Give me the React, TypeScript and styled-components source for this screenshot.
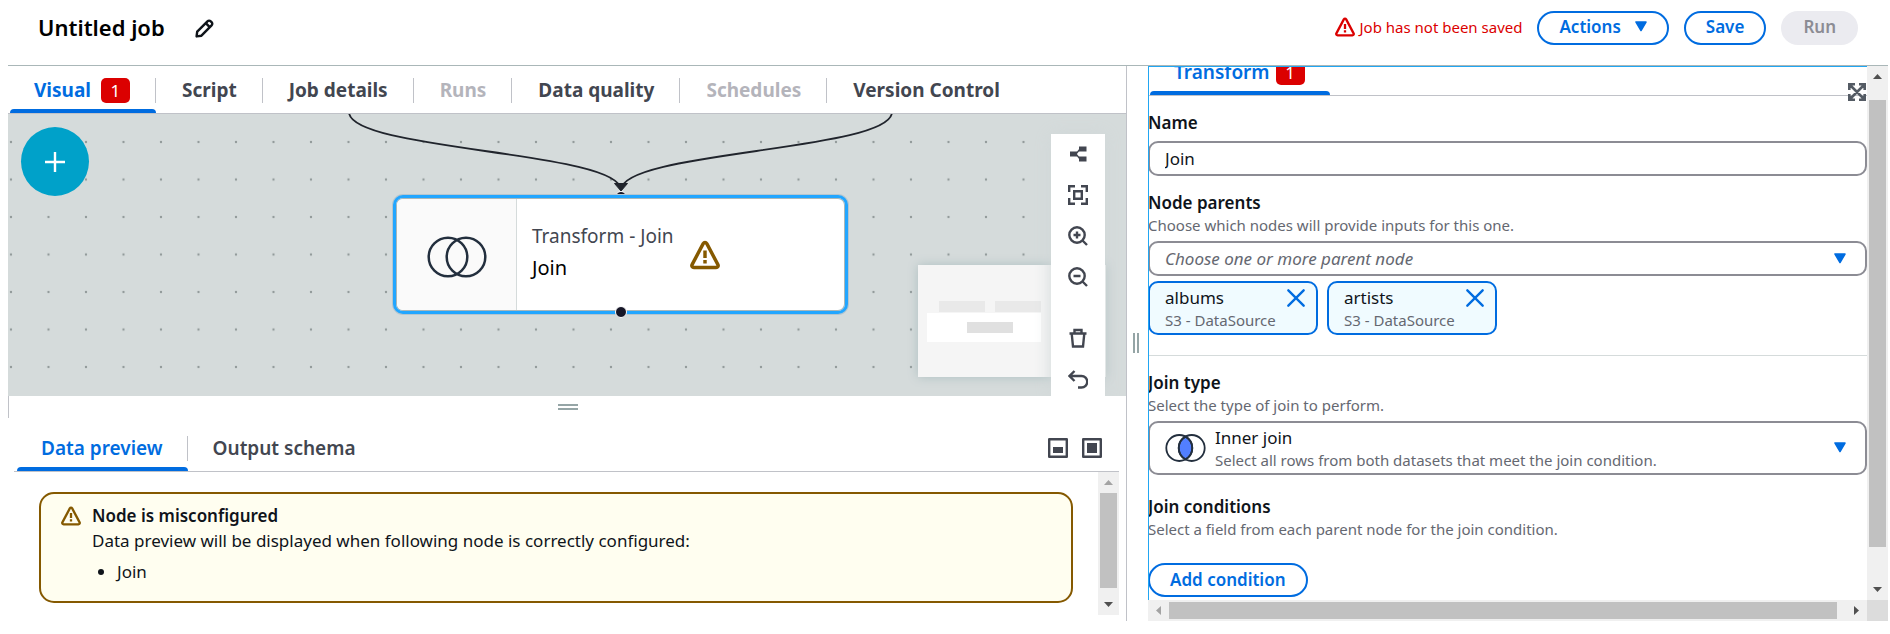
import React from 'react';
import styled, { createGlobalStyle, css } from 'styled-components';

const blue = '#006ce0';
const ink = '#0f141a';
const slate = '#424650';
const muted = '#656871';
const line = '#c0c2c8';

const GlobalStyle = createGlobalStyle`
  *, *::before, *::after { box-sizing: border-box; }
  body {
    margin: 0;
    background: #fff;
    color: ${ink};
    font: 17px/25px "Noto Sans", "Open Sans", sans-serif;
  }
  button, input, select { font: inherit; color: inherit; }
  button { cursor: pointer; }
  svg { display: block; flex: none; }
  h1, h2, p, ul { margin: 0; }
`;

/* ---------- page frame ---------- */

const Page = styled.div`
  display: flex;
  flex-direction: column;
  height: 100vh;
  min-height: 560px;
  padding: 0 2px 13px 8px;
`;

const Header = styled.header`
  display: flex;
  align-items: center;
  justify-content: space-between;
  flex: none;
  height: 66px;
  padding: 0 30px 10px;
  border-bottom: 1px solid #aab7b8;
`;

const Group = styled.div<{ $gap: number }>`
  display: flex;
  align-items: center;
  gap: ${p => p.$gap}px;
`;

const Title = styled.h1`
  padding-bottom: 2px;
  font-size: 22px;
  line-height: 30px;
  font-weight: 600;
  color: #000;
`;

const IconButton = styled.button`
  display: flex;
  align-items: center;
  justify-content: center;
  padding: 0;
  border: 0;
  background: none;
  color: ${slate};
`;

const RenameButton = styled(IconButton)`
  padding-top: 2px;
  color: ${ink};
`;

const SaveNotice = styled.p`
  display: flex;
  align-items: center;
  gap: 4px;
  padding-bottom: 2px;
  font-size: 15px;
  line-height: 20px;
  color: #db0000;
`;

const Button = styled.button`
  display: inline-flex;
  align-items: center;
  gap: 14px;
  height: 34px;
  padding: 0 20px 2px;
  border: 2px solid ${blue};
  border-radius: 17px;
  background: #fff;
  color: ${blue};
  font-weight: 600;
  &:disabled {
    border-color: #ebebf0;
    background: #ebebf0;
    color: #8c8c94;
  }
`;

const Main = styled.main`
  display: grid;
  grid-template-columns: minmax(0, 1119fr) 21px minmax(0, 740fr);
  flex: 1;
  min-height: 0;
`;

const LeftPane = styled.section`
  display: flex;
  flex-direction: column;
  min-height: 0;
  border-right: 1px solid ${line};
`;

const Splitter = styled.div<{ $vertical?: boolean }>`
  display: flex;
  align-items: center;
  justify-content: center;
  flex: none;
  ${p => p.$vertical
    ? css`
        padding: 0 3px 2px 0;
        &::before { content: ''; width: 6px; height: 20px; border: solid #95a5a6; border-width: 0 2px; }
      `
    : css`
        height: 22px;
        padding-bottom: 1px;
        border-left: 1px solid ${line};
        &::before { content: ''; width: 20px; height: 6px; border: solid #95a5a6; border-width: 2px 0; }
      `}
`;

/* ---------- tabs ---------- */

const TabBar = styled.div<{ $inset?: number }>`
  display: flex;
  align-items: center;
  justify-content: space-between;
  flex: none;
  height: 48px;
  padding: 0 17px 0 ${p => p.$inset ?? 2}px;
  border-bottom: 1px solid ${line};
`;

const ClippedTabBar = styled(TabBar)`
  align-items: flex-end;
  height: 30px;
  padding-right: 0;
  overflow: hidden;
`;

const TabList = styled.div<{ $compact?: boolean }>`
  display: flex;
  gap: ${p => (p.$compact ? 1 : 2)}px;
  font-weight: ${p => (p.$compact ? 600 : 700)};
`;

const Tab = styled.button`
  position: relative;
  height: 47px;
  padding: 0;
  border: 0;
  background: none;
  color: ${slate};
  font-size: 19px;
  white-space: nowrap;
  &:disabled { color: #b4b4bb; }
  &[aria-selected='true'] { color: ${blue}; }
  &[aria-selected='true']::after {
    content: '';
    position: absolute;
    inset: auto 0 0 0;
    height: 4px;
    border-radius: 4px 4px 0 0;
    background: ${blue};
  }
`;

const TabLabel = styled.span<{ $compact?: boolean }>`
  display: flex;
  align-items: center;
  gap: ${p => (p.$compact ? 6 : 10)}px;
  height: 25px;
  margin-top: 2px;
  padding: 0 ${p => (p.$compact ? 24 : 25)}px 0 24px;
  border-right: 1px solid ${line};
  ${Tab}:last-child & { border-right-color: transparent; }
`;

const Badge = styled.span`
  width: 29px;
  height: 25px;
  border-radius: 5px;
  background: #db0000;
  color: #fff;
  font-size: 17px;
  font-weight: 400;
  line-height: 25px;
  text-align: center;
`;

type TabItem = { name: string; badge?: number; disabled?: boolean };

function Tabs({ label, items, compact }: { label: string; items: TabItem[]; compact?: boolean }) {
  return (
    <TabList role="tablist" aria-label={label} $compact={compact}>
      {items.map((item, i) => (
        <Tab key={item.name} role="tab" aria-selected={i === 0} disabled={item.disabled}>
          <TabLabel $compact={compact}>
            {item.name}
            {item.badge && <Badge>{item.badge}</Badge>}
          </TabLabel>
        </Tab>
      ))}
    </TabList>
  );
}

/* ---------- diagram canvas ---------- */

const Canvas = styled.div`
  position: relative;
  flex: 1;
  min-height: 0;
  overflow: hidden;
  background: #d5dbdb;
`;

const Backdrop = styled.svg`
  position: absolute;
  inset: 0;
  width: 100%;
  height: 100%;
`;

const AddButton = styled.button`
  position: absolute;
  left: 13px;
  top: 13px;
  display: flex;
  align-items: center;
  justify-content: center;
  width: 68px;
  height: 69px;
  border: 0;
  border-radius: 50%;
  background: #00a1c9;
  color: #fff;
`;

const Node = styled.div`
  position: absolute;
  left: 385px;
  top: 81px;
  display: flex;
  width: 455px;
  height: 119px;
  border: 3px solid #22a6ff;
  border-radius: 10px;
  background: #fff;
  box-shadow: inset 0 0 0 1px #aab7b8, 0 0 0 1px #b5c6cf;
`;

const NodeIcon = styled.div`
  display: flex;
  align-items: center;
  justify-content: center;
  width: 120px;
  margin: 1px 0 1px 1px;
  padding-top: 5px;
  border-right: 1px solid #d5dbdb;
  border-radius: 6px 0 0 6px;
  background: #fafafa;
`;

const NodeBody = styled.div`
  display: flex;
  align-items: center;
  gap: 16px;
  padding-left: 15px;
`;

const NodeText = styled.div`
  padding-bottom: 5px;
`;

const NodeKind = styled.p`
  font-size: 19px;
  line-height: 32px;
  color: ${slate};
`;

const NodeName = styled.p`
  font-size: 20px;
  line-height: 32px;
  color: #000;
`;

const Port = styled.span<{ $bottom?: boolean }>`
  position: absolute;
  left: 607px;
  top: ${p => (p.$bottom ? 192 : 77)}px;
  width: 12px;
  height: 12px;
  border: 1px solid #fff;
  border-radius: 50%;
  background: #161627;
`;

const MiniMap = styled.div`
  position: absolute;
  right: 20px;
  bottom: 19px;
  width: 188px;
  height: 112px;
  background: #f5f5f5;
  box-shadow: 0 0 10px #aebfc1;
`;

const ToolBar = styled.div`
  position: absolute;
  right: 21px;
  top: 20px;
  bottom: 0;
  display: flex;
  flex-direction: column;
  gap: 1px;
  width: 54px;
  background: #fff;
  box-shadow: 0 0 16px #d0d7d8;
`;

const Tool = styled(IconButton)<{ $spaced?: boolean }>`
  flex: none;
  height: 40px;
  margin-top: ${p => (p.$spaced ? 20 : 0)}px;
`;

/* ---------- lower panel ---------- */

const LowerPanel = styled.section`
  display: flex;
  flex-direction: column;
  flex: none;
  padding: 6px 7px 6px 6px;
`;

const PreviewArea = styled.div`
  display: flex;
  height: 143px;
`;

const AlertSlot = styled.div`
  flex: 1;
  padding: 20px 25px 12px;
`;

const Alert = styled.div`
  display: flex;
  gap: 11px;
  height: 111px;
  padding: 9px 20px;
  border: 2px solid #855900;
  border-radius: 15px;
  background: #fffef0;
`;

const IconTint = styled.span`
  color: #855900;
`;

const AlertIcon = styled(IconTint)`
  padding-top: 3px;
`;

const AlertTitle = styled.h2`
  font-size: 17px;
  line-height: 25px;
  font-weight: 600;
`;

const AlertList = styled.ul`
  margin-top: 6px;
  padding-left: 25px;
`;

/* ---------- scroll bars ---------- */

const Track = styled.div<{ $horizontal?: boolean }>`
  display: flex;
  flex-direction: ${p => (p.$horizontal ? 'row' : 'column')};
  flex: none;
  ${p => (p.$horizontal ? 'height: 21px;' : 'width: 21px;')}
  background: #f0f0f0;
`;

const ScrollArrow = styled(IconButton)<{ $dim?: boolean }>`
  flex: none;
  width: 21px;
  height: 21px;
  color: ${p => (p.$dim ? '#a3a3a3' : '#505050')};
`;

const Gap = styled.div<{ $grow: number; $horizontal?: boolean }>`
  flex: ${p => p.$grow} 1 0;
`;

const Thumb = styled(Gap)`
  margin: ${p => (p.$horizontal ? '2px 0' : '0 2px')};
  background: #c1c1c1;
`;

function ScrollBar({ horizontal, before, size, after, dimStart }: {
  horizontal?: boolean; before: number; size: number; after: number; dimStart?: boolean;
}) {
  const start = horizontal ? 'M8 10.5 13 6v9z' : 'M6 13h9l-4.500-5z';
  const end = horizontal ? 'M13 10.500 8 6v9z' : 'M6 8h9l-4.500 5z';
  return (
    <Track $horizontal={horizontal}>
      <ScrollArrow $dim={dimStart} aria-label={horizontal ? 'Scroll left' : 'Scroll up'}>
        <svg width="21" height="21"><path d={start} fill="currentColor" /></svg>
      </ScrollArrow>
      {before > 0 && <Gap $grow={before} />}
      <Thumb $grow={size} $horizontal={horizontal} />
      <Gap $grow={after} />
      <ScrollArrow aria-label={horizontal ? 'Scroll right' : 'Scroll down'}>
        <svg width="21" height="21"><path d={end} fill="currentColor" /></svg>
      </ScrollArrow>
    </Track>
  );
}

/* ---------- properties panel ---------- */

const RightPane = styled.section`
  display: grid;
  grid-template-columns: minmax(0, 1fr) 21px;
  grid-template-rows: minmax(0, 1fr) 21px;
  min-height: 0;
`;

const Properties = styled.div`
  position: relative;
  overflow: hidden;
  &::after {
    content: '';
    position: absolute;
    inset: 0;
    border: solid #22a6f2;
    border-width: 1px 0 0 1px;
    pointer-events: none;
  }
`;

const ExpandButton = styled(IconButton)`
  position: absolute;
  right: 1px;
  top: 17px;
  color: #545b64;
`;

const Corner = styled.div`
  background: #dcdcdc;
`;

const Form = styled.form`
  padding-top: 14px;
`;

const Field = styled.div<{ $after: number }>`
  margin-bottom: ${p => p.$after}px;
`;

const Label = styled.label`
  display: block;
  font-weight: 600;
`;

const SectionTitle = styled.h2`
  font-size: 17px;
  line-height: 25px;
  font-weight: 600;
`;

const Hint = styled.p`
  font-size: 15px;
  line-height: 20px;
  color: ${muted};
`;

const boxed = css`
  width: 100%;
  margin-top: 6px;
  border: 2px solid #8c8c94;
  border-radius: 10px;
  background: #fff;
`;

const TextInput = styled.input`
  ${boxed}
  display: block;
  height: 35px;
  padding: 0 15px;
`;

const SelectBox = styled.div`
  ${boxed}
  display: flex;
  align-items: center;
  gap: 9px;
  padding: 2px 19px 3px 15px;
`;

const CompactSelectBox = styled(SelectBox)`
  height: 35px;
`;

const Select = styled.select<{ $placeholder?: boolean }>`
  display: block;
  flex: 1;
  width: 100%;
  height: 25px;
  padding: 0;
  border: 0;
  background: none;
  appearance: none;
  ${p => p.$placeholder && css`color: ${muted}; font-style: italic;`}
`;

const Grow = styled.div`
  flex: 1;
  min-width: 0;
`;

const Tokens = styled.ul`
  display: flex;
  gap: 9px;
  margin-top: 5px;
  padding: 0;
  list-style: none;
`;

const Token = styled.li`
  display: flex;
  align-items: flex-start;
  justify-content: space-between;
  width: 170px;
  padding: 2px 10px 3px 15px;
  border: 2px solid ${blue};
  border-radius: 10px;
  background: #f0fbff;
`;

const TokenRemove = styled(IconButton)`
  width: 20px;
  height: 25px;
  color: ${blue};
`;

const Rule = styled.hr`
  height: 1px;
  margin: 20px 0 14px;
  border: 0;
  background: #d5dbdb;
`;

/* ---------- icons ---------- */

const WarningIcon = ({ size }: { size: number }) => (
  <svg width={size} height={size} viewBox="0 0 20 20" fill="none" stroke="currentColor" strokeWidth="2.300" strokeLinejoin="round">
    <path d="M10 1.600c-.5 0-.9.300-1.200.800L1.400 16.400c-.5.900.1 1.900 1.200 1.900h14.800c1.100 0 1.700-1 1.200-1.900L11.200 2.400c-.3-.5-.7-.8-1.200-.8z" />
    <path d="M10 7v5M10 13.300v2.300" />
  </svg>
);

const PencilIcon = () => (
  <svg width="19" height="19" viewBox="0 0 18 18" fill="none" stroke="currentColor" strokeWidth="2.300" strokeLinejoin="round">
    <path d="M1.500 16.500l.6-4.600L11.800 2.200c.9-.9 2.200-.9 3.100 0l.8.800c.9.900.9 2.200 0 3.100L6.100 15.800z" />
    <path d="M10.200 3.900l4 4" />
  </svg>
);

const CaretIcon = () => (
  <svg width="12" height="11" viewBox="0 0 12 11">
    <path d="M1 1h10L6 9.500z" fill={blue} stroke={blue} strokeWidth="1.500" strokeLinejoin="round" />
  </svg>
);

const PlusIcon = () => (
  <svg width="20" height="20" viewBox="0 0 20 20" stroke="currentColor" strokeWidth="2.400">
    <path d="M10 0v20M0 10h20" />
  </svg>
);

const VennIcon = () => (
  <svg width="60" height="42" viewBox="0 0 60 42" fill="none" stroke="#232f3e" strokeWidth="2.500">
    <circle cx="21" cy="21" r="19.300" />
    <circle cx="39" cy="21" r="19.300" />
  </svg>
);

const InnerJoinIcon = () => (
  <svg width="41" height="28" viewBox="0 0 41 28" fill="none" stroke="#232f3e" strokeWidth="1.800">
    <path d="M20.500 2.600a13 13 0 0 1 0 22.800a13 13 0 0 1 0-22.800z" fill="#527fff" />
    <circle cx="14.300" cy="14" r="13" />
    <circle cx="26.700" cy="14" r="13" />
  </svg>
);

const CloseIcon = () => (
  <svg width="18" height="18" viewBox="0 0 16 16" stroke="currentColor" strokeWidth="2.100" strokeLinecap="round">
    <path d="M1.200 1.200l13.600 13.600M14.800 1.200L1.200 14.800" />
  </svg>
);

const ExpandIcon = () => (
  <svg width="18" height="18" viewBox="0 0 18 18" fill="none" stroke="currentColor" strokeWidth="2.600">
    <path d="M1.300 7V1.300H7M11 1.300h5.700V7M16.700 11v5.700H11M7 16.700H1.300V11M1.500 1.500l15 15M16.500 1.500l-15 15" />
  </svg>
);

const PanelIcon = ({ full }: { full?: boolean }) => (
  <svg width="20" height="20" viewBox="0 0 20 20" stroke="currentColor">
    <rect x="1.200" y="1.200" width="17.600" height="17.600" fill="none" strokeWidth="2.400" strokeLinejoin="round" />
    {full
      ? <rect x="5" y="5" width="10" height="10" fill="currentColor" stroke="none" />
      : <rect x="5" y="9" width="10" height="6" fill="currentColor" stroke="none" />}
  </svg>
);

const Glyph = ({ children }: { children: React.ReactNode }) => (
  <svg width="20" height="20" viewBox="0 0 20 20" fill="none" stroke="currentColor" strokeWidth="2.400">{children}</svg>
);

const tools: { label: string; spaced?: boolean; glyph: React.ReactNode }[] = [
  {
    label: 'Arrange nodes',
    glyph: (
      <>
        <path d="M2 7.500h7v5H2zM11 2.500h7.500v5H11zM11 12.500h7.500v5H11z" fill="currentColor" stroke="none" />
        <path d="M8 10l4-5M8 10l4 5" strokeWidth="1.300" />
      </>
    ),
  },
  {
    label: 'Fit to screen',
    glyph: <path d="M1.200 7V1.200H7M13 1.200h5.800V7M18.800 13v5.800H13M7 18.800H1.200V13M6.200 6.200h7.600v7.600H6.200z" />,
  },
  {
    label: 'Zoom in',
    glyph: <><circle cx="9" cy="9" r="7.700" /><path d="M14.500 14.500l4.500 4.500M9 5.500v7M5.500 9h7" /></>,
  },
  {
    label: 'Zoom out',
    glyph: <><circle cx="9" cy="9" r="7.700" /><path d="M14.500 14.500l4.500 4.500M5.500 9h7" /></>,
  },
  {
    label: 'Delete',
    spaced: true,
    glyph: <path d="M1.500 5.500h17M3.700 5.500L5 18.500h10l1.300-13M6.500 5V2h7v3" />,
  },
  {
    label: 'Undo',
    glyph: <path d="M6.500 2L1.500 7l5 5M1.500 7h12a5.500 5.500 0 0 1 0 11.500H10" />,
  },
];

/* ---------- parts ---------- */

function Diagram() {
  return (
    <Canvas>
      <Backdrop aria-hidden="true">
        <defs>
          <pattern id="dots" x="-15.750" y="9.250" width="37.500" height="37.500" patternUnits="userSpaceOnUse">
            <circle cx="18.750" cy="18.750" r="1.200" fill="#939b9b" />
          </pattern>
        </defs>
        <rect width="100%" height="100%" fill="url(#dots)" />
        <g fill="none" stroke="#20242c" strokeWidth="1.800">
          <path d="M341-2C341 37 613 37 613 76" />
          <path d="M884-2C884 37 613 37 613 76" />
        </g>
        <path d="M606.500 69.500h13L613 77z" fill="#20242c" stroke="#20242c" strokeLinejoin="round" />
      </Backdrop>
      <AddButton aria-label="Add node"><PlusIcon /></AddButton>
      <Port />
      <Node>
        <NodeIcon><VennIcon /></NodeIcon>
        <NodeBody>
          <NodeText>
            <NodeKind>Transform - Join</NodeKind>
            <NodeName>Join</NodeName>
          </NodeText>
          <IconTint><WarningIcon size={30} /></IconTint>
        </NodeBody>
      </Node>
      <Port $bottom />
      <MiniMap>
        <svg width="188" height="112">
          <path d="M21 36h46v11H21zM77 36h46v11H77z" fill="#e9e9e9" />
          <path d="M9 48h114v29H9z" fill="#fff" />
          <path d="M49 57h46v11H49z" fill="#e0e0e0" />
        </svg>
      </MiniMap>
      <ToolBar>
        {tools.map(t => (
          <Tool key={t.label} aria-label={t.label} $spaced={t.spaced}><Glyph>{t.glyph}</Glyph></Tool>
        ))}
      </ToolBar>
    </Canvas>
  );
}

function Preview() {
  return (
    <LowerPanel>
      <TabBar $inset={3}>
        <Tabs compact label="Node output" items={[{ name: 'Data preview' }, { name: 'Output schema' }]} />
        <Group $gap={14}>
          <IconButton aria-label="Split view"><PanelIcon /></IconButton>
          <IconButton aria-label="Full view"><PanelIcon full /></IconButton>
        </Group>
      </TabBar>
      <PreviewArea>
        <AlertSlot>
          <Alert role="alert">
            <AlertIcon><WarningIcon size={20} /></AlertIcon>
            <div>
              <AlertTitle>Node is misconfigured</AlertTitle>
              <p>Data preview will be displayed when following node is correctly configured:</p>
              <AlertList><li>Join</li></AlertList>
            </div>
          </Alert>
        </AlertSlot>
        <ScrollBar before={0} size={95} after={6} dimStart />
      </PreviewArea>
    </LowerPanel>
  );
}

function PropertiesForm() {
  return (
    <Form onSubmit={e => e.preventDefault()}>
      <Field $after={14}>
        <Label htmlFor="name">Name</Label>
        <TextInput id="name" defaultValue="Join" />
      </Field>
      <Field $after={0}>
        <Label htmlFor="parents">Node parents</Label>
        <Hint>Choose which nodes will provide inputs for this one.</Hint>
        <CompactSelectBox>
          <Select id="parents" $placeholder defaultValue="">
            <option value="">Choose one or more parent node</option>
          </Select>
          <CaretIcon />
        </CompactSelectBox>
        <Tokens>
          {['albums', 'artists'].map(name => (
            <Token key={name}>
              <div>
                {name}
                <Hint>S3 - DataSource</Hint>
              </div>
              <TokenRemove type="button" aria-label={`Remove ${name}`}><CloseIcon /></TokenRemove>
            </Token>
          ))}
        </Tokens>
      </Field>
      <Rule />
      <Field $after={19}>
        <Label htmlFor="join-type">Join type</Label>
        <Hint>Select the type of join to perform.</Hint>
        <SelectBox>
          <InnerJoinIcon />
          <Grow>
            <Select id="join-type"><option>Inner join</option></Select>
            <Hint>Select all rows from both datasets that meet the join condition.</Hint>
          </Grow>
          <CaretIcon />
        </SelectBox>
      </Field>
      <Field $after={24}>
        <SectionTitle>Join conditions</SectionTitle>
        <Hint>Select a field from each parent node for the join condition.</Hint>
      </Field>
      <Button type="button">Add condition</Button>
    </Form>
  );
}

export default function App() {
  return (
    <>
      <GlobalStyle />
      <Page>
        <Header>
          <Group $gap={30}>
            <Title>Untitled job</Title>
            <RenameButton aria-label="Rename job"><PencilIcon /></RenameButton>
          </Group>
          <Group $gap={15}>
            <SaveNotice><WarningIcon size={20} />Job has not been saved</SaveNotice>
            <Button>Actions <CaretIcon /></Button>
            <Button>Save</Button>
            <Button disabled>Run</Button>
          </Group>
        </Header>
        <Main>
          <LeftPane>
            <TabBar>
              <Tabs
                label="Job"
                items={[
                  { name: 'Visual', badge: 1 },
                  { name: 'Script' },
                  { name: 'Job details' },
                  { name: 'Runs', disabled: true },
                  { name: 'Data quality' },
                  { name: 'Schedules', disabled: true },
                  { name: 'Version Control' },
                ]}
              />
            </TabBar>
            <Diagram />
            <Splitter role="separator" />
            <Preview />
          </LeftPane>
          <Splitter role="separator" $vertical />
          <RightPane>
            <Properties>
              <ClippedTabBar>
                <Tabs compact label="Node properties" items={[{ name: 'Transform', badge: 1 }]} />
              </ClippedTabBar>
              <ExpandButton aria-label="Expand panel"><ExpandIcon /></ExpandButton>
              <PropertiesForm />
            </Properties>
            <ScrollBar before={13} size={447} after={32} />
            <ScrollBar horizontal before={0} size={668} after={9} dimStart />
            <Corner />
          </RightPane>
        </Main>
      </Page>
    </>
  );
}
